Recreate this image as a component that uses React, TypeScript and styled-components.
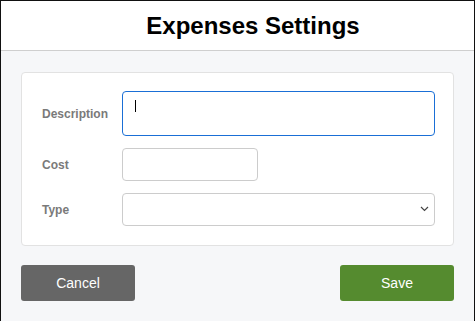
import * as React from "react";
import styled, { createGlobalStyle } from "styled-components";

const GlobalStyle = createGlobalStyle`
  html, body {
    margin: 0;
    padding: 0;
    background: #f6f7f9;
  }
  * {
    box-sizing: border-box;
  }
`;

const Window = styled.div`
  width: 475px;
  height: 321px;
  border: 1px solid #111;
  border-bottom: none;
  background: #f6f7f9;
  font-family: "Liberation Sans", Arial, sans-serif;
  display: flex;
  flex-direction: column;
`;

const Header = styled.header`
  height: 50px;
  flex-shrink: 0;
  background: #fff;
  border-bottom: 1px solid #cfcfcf;
  display: flex;
  align-items: center;
  justify-content: center;
  padding-left: 31px;
`;

const Title = styled.h1`
  margin: 0;
  font-size: 24px;
  font-weight: 700;
  color: #000;
`;

const Body = styled.div`
  padding: 21px 20px 20px 20px;
  display: flex;
  flex-direction: column;
  gap: 19px;
`;

const Card = styled.div`
  background: #fff;
  border: 1px solid #e2e2e2;
  border-radius: 4px;
  padding: 18px 18px 19px 20px;
  display: grid;
  grid-template-columns: 80px 1fr;
  row-gap: 12px;
  align-items: center;
`;

const Label = styled.label`
  font-size: 12px;
  font-weight: 700;
  color: #7a7a7a;
`;

const FieldWrap = styled.div`
  position: relative;
  display: flex;
`;

const TextArea = styled.textarea<{ $focused?: boolean }>`
  width: 313px;
  height: 45px;
  resize: none;
  border: 1px solid ${p => (p.$focused ? "#1a6fd6" : "#cccccc")};
  border-radius: 4px;
  outline: none;
  padding: 8px 12px;
  font-family: inherit;
  font-size: 14px;
`;

const Caret = styled.span`
  position: absolute;
  left: 13px;
  top: 9px;
  width: 1px;
  height: 12px;
  background: #000;
`;

const TextInput = styled.input<{ $width: number }>`
  width: ${p => p.$width}px;
  height: 33px;
  border: 1px solid #cccccc;
  border-radius: 4px;
  outline: none;
  padding: 0 10px;
  font-family: inherit;
  font-size: 14px;
`;

const Select = styled.select`
  appearance: none;
  width: 313px;
  height: 33px;
  border: 1px solid #cccccc;
  border-radius: 4px;
  outline: none;
  background: #fff;
  padding: 0 10px;
  font-family: inherit;
  font-size: 14px;
`;

const Chevron = styled.svg`
  position: absolute;
  left: 298px;
  top: 13px;
  pointer-events: none;
`;

const Actions = styled.div`
  display: flex;
  justify-content: space-between;
`;

const Button = styled.button<{ $tone: "neutral" | "primary" }>`
  width: 114px;
  height: 36px;
  border: none;
  border-radius: 3px;
  color: #fff;
  font-family: inherit;
  font-size: 14px;
  background: ${p => (p.$tone === "primary" ? "#558b2f" : "#666666")};
  cursor: pointer;
`;

export default function App() {
  return (
    <>
      <GlobalStyle />
      <Window>
        <Header>
          <Title>Expenses Settings</Title>
        </Header>
        <Body>
          <Card>
            <Label htmlFor="description">Description</Label>
            <FieldWrap>
              <TextArea id="description" $focused />
              <Caret />
            </FieldWrap>
            <Label htmlFor="cost">Cost</Label>
            <FieldWrap>
              <TextInput id="cost" $width={136} />
            </FieldWrap>
            <Label htmlFor="type">Type</Label>
            <FieldWrap>
              <Select id="type" defaultValue="">
                <option value=""></option>
              </Select>
              <Chevron width="9" height="6" viewBox="0 0 9 6">
                <path d="M1 1l3.5 3.5L8 1" fill="none" stroke="#444" strokeWidth="1.2" />
              </Chevron>
            </FieldWrap>
          </Card>
          <Actions>
            <Button $tone="neutral">Cancel</Button>
            <Button $tone="primary">Save</Button>
          </Actions>
        </Body>
      </Window>
    </>
  );
}
